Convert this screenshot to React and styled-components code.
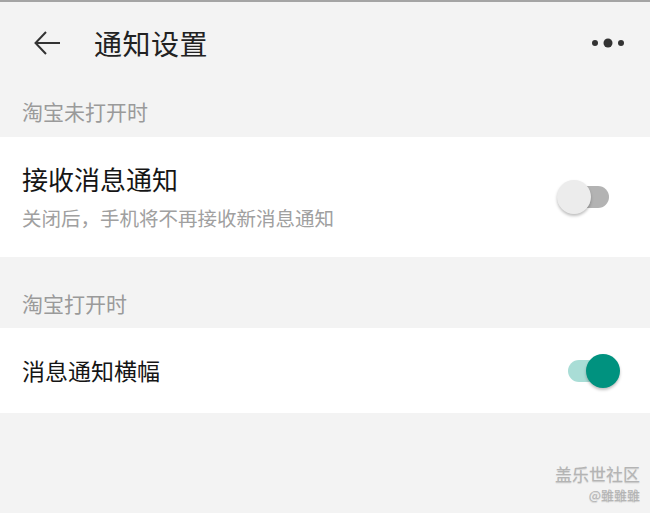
import styled, { createGlobalStyle } from 'styled-components'

const GlobalStyle = createGlobalStyle`
  html, body {
    margin: 0;
    padding: 0;
    background: #f3f3f3;
  }
  body {
    font-family: "Noto Sans CJK SC", "Noto Sans", Roboto, sans-serif;
  }
`

const Page = styled.div`
  position: relative;
  width: 650px;
  height: 513px;
  background: #f3f3f3;
  border-top: 2px solid #a4a4a4;
  box-sizing: border-box;
  overflow: hidden;
`

const Header = styled.div`
  height: 82px;
  display: flex;
  align-items: center;
  padding: 0 22px 0 30px;
`

const BackButton = styled.div`
  width: 34px;
  height: 34px;
  display: flex;
  align-items: center;
  justify-content: center;
  margin-right: 30px;
`

const Title = styled.h1`
  flex: 1;
  margin: 0;
  font-size: 28px;
  font-weight: 400;
  color: #222;
  letter-spacing: 0.5px;
`

const MoreButton = styled.div`
  width: 40px;
  display: flex;
  align-items: center;
  justify-content: center;
`

const SectionLabel = styled.div`
  height: ${(p) => p.$h}px;
  display: flex;
  align-items: ${(p) => p.$align || 'center'};
  padding: ${(p) => p.$pad || '0'} 22px 0;
  box-sizing: border-box;
  font-size: 21px;
  color: #9a9a9a;
`

const Card = styled.div`
  background: #fff;
  height: ${(p) => p.$h}px;
  display: flex;
  align-items: center;
  padding: 0 22px;
`

const TextBlock = styled.div`
  flex: 1;
  display: flex;
  flex-direction: column;
`

const ItemTitle = styled.div`
  font-size: ${(p) => p.$size || 26}px;
  color: #151515;
  line-height: 1.3;
`

const ItemSub = styled.div`
  margin-top: 8px;
  font-size: 19.5px;
  color: #a0a0a0;
`

const Switch = styled.div`
  position: relative;
  width: 58px;
  height: 36px;
  margin-right: ${(p) => p.$mr}px;
`

const Track = styled.div`
  position: absolute;
  left: 6px;
  right: 6px;
  top: 7px;
  height: 22px;
  border-radius: 11px;
  background: ${(p) => (p.$on ? '#a9ddd6' : '#b3b3b3')};
`

const Thumb = styled.div`
  position: absolute;
  top: 1px;
  left: ${(p) => (p.$on ? '24px' : '0')};
  width: 34px;
  height: 34px;
  border-radius: 50%;
  background: ${(p) => (p.$on ? '#00927f' : '#ececec')};
  box-shadow: 0 2px 3px rgba(0, 0, 0, 0.25);
`

const Watermark = styled.div`
  position: absolute;
  right: 10px;
  bottom: 8px;
  display: flex;
  flex-direction: column;
  align-items: flex-end;
  color: #b4b4b4;
  text-shadow: 0 1px 1px rgba(0, 0, 0, 0.15);
`

const MarkTitle = styled.div`
  font-size: 17px;
  line-height: 22px;
`

const MarkSub = styled.div`
  font-size: 13px;
  line-height: 20px;
`

function Toggle({ on, mr }) {
  return (
    <Switch $mr={mr}>
      <Track $on={on} />
      <Thumb $on={on} />
    </Switch>
  )
}

export default function App() {
  return (
    <>
      <GlobalStyle />
      <Page>
        <Header>
          <BackButton>
            <svg width="28" height="28" viewBox="0 0 28 28" fill="none" stroke="#333" strokeWidth="2">
              <path d="M27 14H3M13 3L2.5 14L13 25" />
            </svg>
          </BackButton>
          <Title>通知设置</Title>
          <MoreButton>
            <svg width="34" height="12" viewBox="0 0 34 12" fill="#333">
              <circle cx="4" cy="6" r="3" />
              <circle cx="17" cy="6" r="4.5" />
              <circle cx="30" cy="6" r="3" />
            </svg>
          </MoreButton>
        </Header>
        <SectionLabel $h={53}>淘宝未打开时</SectionLabel>
        <Card $h={120}>
          <TextBlock>
            <ItemTitle>接收消息通知</ItemTitle>
            <ItemSub>关闭后，手机将不再接收新消息通知</ItemSub>
          </TextBlock>
          <Toggle on={false} mr={13} />
        </Card>
        <SectionLabel $h={71} $align="flex-start" $pad="31px">淘宝打开时</SectionLabel>
        <Card $h={85}>
          <TextBlock>
            <ItemTitle $size={23}>消息通知横幅</ItemTitle>
          </TextBlock>
          <Toggle on mr={8} />
        </Card>
        <Watermark>
          <MarkTitle>盖乐世社区</MarkTitle>
          <MarkSub>@雖雖雖</MarkSub>
        </Watermark>
      </Page>
    </>
  )
}
